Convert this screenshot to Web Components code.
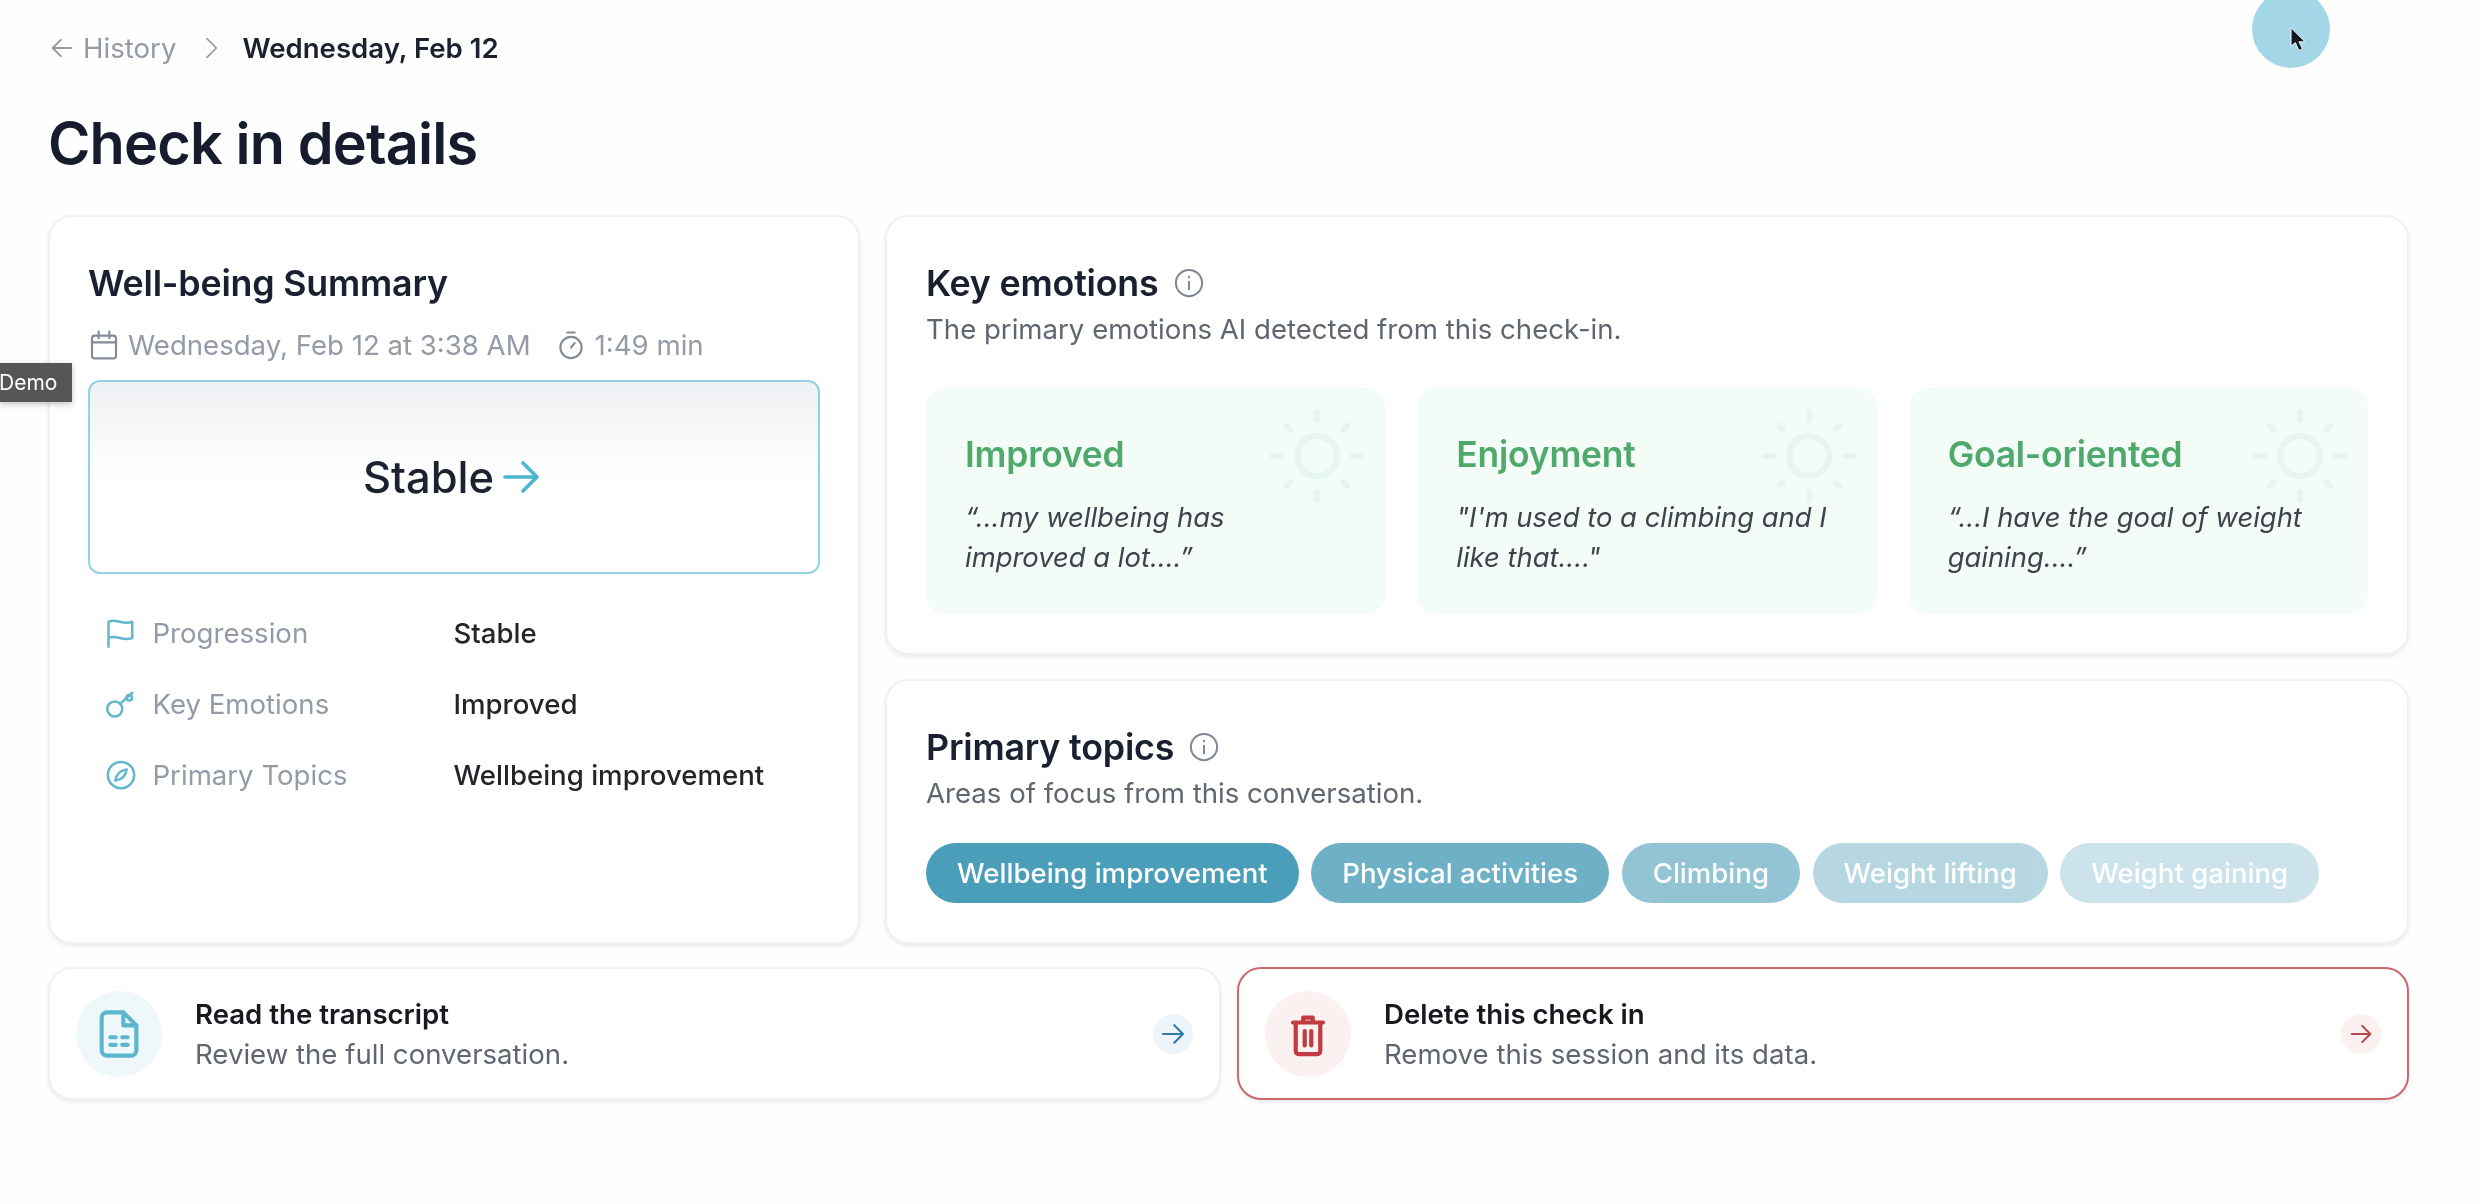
<!DOCTYPE html>
<html lang="en">
<head>
<meta charset="utf-8">
<title>Check in details</title>
<style>
  html, body { margin: 0; height: 100%; background: #fefefe; overflow: hidden; }
  body { font-family: Inter, "Liberation Sans", sans-serif; color: #1a2030; filter: blur(0.7px); }
</style>
</head>
<body>
<checkin-page>
  <bread-crumb slot="crumb" back="History" current="Wednesday, Feb 12"></bread-crumb>
  <h-title slot="title">Check in details</h-title>

  <summary-card slot="summary"></summary-card>

  <info-card slot="emotions" heading="Key emotions" sub="The primary emotions AI detected from this check-in.">
    <emotion-grid>
      <emotion-card name="Improved">“...my wellbeing has improved a lot....”</emotion-card>
      <emotion-card name="Enjoyment">"I'm used to a climbing and I like that...."</emotion-card>
      <emotion-card name="Goal-oriented">“...I have the goal of weight gaining....”</emotion-card>
    </emotion-grid>
  </info-card>

  <info-card slot="topics" heading="Primary topics" sub="Areas of focus from this conversation.">
    <topic-list>
      <topic-chip fade="1">Wellbeing improvement</topic-chip>
      <topic-chip fade="0.8">Physical activities</topic-chip>
      <topic-chip fade="0.6">Climbing</topic-chip>
      <topic-chip fade="0.4">Weight lifting</topic-chip>
      <topic-chip fade="0.28">Weight gaining</topic-chip>
    </topic-list>
  </info-card>

  <action-card slot="read" icon="file" heading="Read the transcript" sub="Review the full conversation."></action-card>
  <action-card slot="del" danger icon="trash" heading="Delete this check in" sub="Remove this session and its data."></action-card>
</checkin-page>

<script>
// all the icons are drawn on a 24 box, stroke colour comes from currentColor
const ICONS = {
  arrow: '<path d="M4 12h16M13 5l7 7-7 7"/>',
  back: '<path d="M20 12H4M11 5l-7 7 7 7"/>',
  chevron: '<path d="M9 5l7 7-7 7"/>',
  calendar: '<rect x="3" y="5" width="18" height="17" rx="2"/><path d="M3 10h18M8 2v5M16 2v5"/>',
  timer: '<circle cx="12" cy="14" r="8.5"/><path d="M9 2h6M12 14l3-3.5"/>',
  flag: '<path d="M2 23V3c6-3 12 3 19 0v13c-7 3-13-3-19 0"/>',
  key: '<circle cx="7" cy="16" r="6"/><path d="M11.300 11.800L21 3"/><circle cx="18.600" cy="7" r="2.200"/>',
  compass: '<circle cx="12" cy="12" r="10.500"/><path d="M16.500 7.500C16 12 14 15.500 7.500 16.500 8 12 11 8.500 16.500 7.500z"/>',
  info: '<circle cx="12" cy="12" r="10.500"/><path d="M12 11v6M12 7v.6"/>',
  file: '<path d="M14 2H6.500A2.500 2.500 0 0 0 4 4.500v15A2.500 2.500 0 0 0 6.500 22h11a2.500 2.500 0 0 0 2.500-2.500V8z"/><path d="M14 2v6h6M8 13.500h2.500M13.500 13.500H16M8 17h2.500M13.500 17H16"/>',
  trash: '<path d="M4.200 6h15.600M9.500 5.500V3.500h5v2M5.600 6v15a1.500 1.500 0 0 0 1.500 1.500h9.800a1.500 1.500 0 0 0 1.500-1.500V6M10.300 10.500v7.500M13.700 10.500v7.500"/>',
  sun: '<circle cx="12" cy="12" r="5"/><path d="M12 1v2M12 21v2M4.500 4.500l.8.8M18.700 18.700l.8.8M1 12h2M21 12h2M4.500 19.500l.8-.8M18.700 5.300l.8-.8"/>'
};

function icon(name, size, sw) {
  return `<svg width="${size}" height="${size}" viewBox="0 0 24 24" fill="none" stroke="currentColor" stroke-width="${sw}" stroke-linecap="round" stroke-linejoin="round">${ICONS[name]}</svg>`;
}

class CheckinPage extends HTMLElement {
  constructor() {
    super();
    this.attachShadow({ mode: 'open' }).innerHTML = `
    <style>
      :host { display: block; position: relative; height: 1204px; box-sizing: border-box; padding: 30px 71px 0 48px; overflow: hidden; }
      .grid { display: grid; grid-template-columns: 812px 1fr; grid-template-rows: 440px 265px; gap: 24px 25px; margin-top: 37px; }
      .summary { grid-row: 1 / 3; display: grid; }
      .actions { display: grid; grid-template-columns: 1173px 1fr; gap: 16px; margin-top: 23px; height: 133px; }
      .demo { position: absolute; left: 0; top: 363px; width: 72px; height: 39px; background: #565654; color: #fff; font-size: 21px; line-height: 39px; text-indent: -1px; box-shadow: 0 2px 6px rgba(0,0,0,.25); white-space: nowrap; overflow: hidden; }
      .pointer { position: absolute; left: 2252px; top: -10px; width: 78px; height: 78px; border-radius: 50%; background: #a3d6e7; }
      .pointer svg { position: absolute; left: 37px; top: 37px; }
    </style>
    <slot name="crumb"></slot>
    <slot name="title"></slot>
    <div class="grid">
      <div class="summary"><slot name="summary"></slot></div>
      <slot name="emotions"></slot>
      <slot name="topics"></slot>
    </div>
    <div class="actions">
      <slot name="read"></slot>
      <slot name="del"></slot>
    </div>
    <div class="demo">Demo</div>
    <div class="pointer"><svg width="18" height="26" viewBox="0 0 20 30"><path d="M2 1l0 21 5-4 4 9 4-2-4-8h7z" fill="#14171c" stroke="#fff" stroke-width="1"/></svg></div>
    `;
  }
}

class BreadCrumb extends HTMLElement {
  constructor() {
    super();
    this.attachShadow({ mode: 'open' }).innerHTML = `
    <style>
      :host { display: flex; align-items: center; height: 36px; font-size: 27.6px; }
      .back { color: #949ba6; display: flex; align-items: center; gap: 7px; }
      svg { display: block; }
      .sep { color: #949ba6; margin: 0 15px 0 19px; display: flex; }
      .cur { color: #1c2130; font-weight: 600; }
    </style>
    <span class="back">${icon('back', 28, 1.6)}<span>${this.getAttribute('back')}</span></span>
    <span class="sep">${icon('chevron', 32, 1.3)}</span>
    <span class="cur">${this.getAttribute('current')}</span>
    `;
  }
}

class HTitle extends HTMLElement {
  constructor() {
    super();
    this.attachShadow({ mode: 'open' }).innerHTML = `
    <style>
      :host { display: block; font-size: 57.6px; font-weight: 600; line-height: 70px; letter-spacing: -.85px; color: #161c2c; margin-top: 42px; }
    </style>
    <slot></slot>`;
  }
}

// common white box with the soft bottom shadow
const CARD_CSS = `
  background: #fff; border: 2px solid #f0f1f2; border-radius: 24px; box-sizing: border-box;
  box-shadow: 0 2px 4px rgba(20, 30, 40, .09);
`;

class SummaryCard extends HTMLElement {
  constructor() {
    super();
    const rows = [
      ['flag', 'Progression', 'Stable'],
      ['key', 'Key Emotions', 'Improved'],
      ['compass', 'Primary Topics', 'Wellbeing improvement']
    ].map(([ic, label, val]) => `
      <div class="row"><span class="ic">${icon(ic, 30, 2)}</span><span class="lbl">${label}</span><span class="val">${val}</span></div>`).join('');
    this.attachShadow({ mode: 'open' }).innerHTML = `
    <style>
      :host { display: block; ${CARD_CSS} padding: 43px 38px; font-size: 27.6px; }
      h2 { margin: 0; font-size: 35.8px; line-height: 46px; font-weight: 600; letter-spacing: -.2px; color: #1a2030; }
      .meta { display: flex; align-items: center; margin-top: 22px; height: 34px; color: #949ba6; }
      .meta svg { display: block; }
      .meta .t1 { margin: 0 25px 0 8px; }
      .meta .t2 { margin-left: 9px; }
      .meta .ic2 { color: #858c98; display: flex; }
      .status { display: flex; align-items: center; justify-content: center; gap: 3px; height: 194px; margin-top: 18px; box-sizing: border-box; border: 2.500px solid #93d2e3; border-radius: 12px; background: linear-gradient(#eef1f3, #fff 52%); color: #1d2230; font-size: 43.500px; font-weight: 500; }
      .status span { display: flex; color: #4bb5d0; }
      .rows { margin-top: 23px; display: flex; flex-direction: column; }
      .row { display: grid; grid-template-columns: 47px 301px 1fr; align-items: center; height: 71px; margin-left: 17.500px; }
      .ic { color: #62b7cd; display: flex; }
      .lbl { color: #939ba7; }
      .val { color: #232529; font-weight: 500; }
    </style>
    <h2>Well-being Summary</h2>
    <div class="meta">
      <span class="ic2">${icon('calendar', 32, 1.600)}</span><span class="t1">Wednesday, Feb 12 at 3:38 AM</span>
      <span class="ic2">${icon('timer', 30, 1.700)}</span><span class="t2">1:49 min</span>
    </div>
    <div class="status">Stable <span>${icon('arrow', 48, 1.800)}</span></div>
    <div class="rows">${rows}</div>
    `;
  }
}

class InfoCard extends HTMLElement {
  constructor() {
    super();
    this.attachShadow({ mode: 'open' }).innerHTML = `
    <style>
      :host { display: block; ${CARD_CSS} padding: 43px 39px; }
      .head { display: flex; align-items: center; gap: 15px; height: 46px; }
      h2 { margin: 0; font-size: 35.8px; font-weight: 600; letter-spacing: -.2px; color: #1a2030; }
      .head span { display: flex; color: #7f8796; }
      p { margin: 5px 0 0; font-size: 27.6px; line-height: 36px; color: #5f6670; }
      .body { margin-top: 41px; }
    </style>
    <div class="head"><h2>${this.getAttribute('heading')}</h2><span>${icon('info', 30, 1.600)}</span></div>
    <p>${this.getAttribute('sub')}</p>
    <div class="body"><slot></slot></div>
    `;
  }
}

class EmotionGrid extends HTMLElement {
  constructor() {
    super();
    this.attachShadow({ mode: 'open' }).innerHTML = `
    <style>:host { display: grid; grid-template-columns: repeat(3, 1fr); gap: 32px; }</style>
    <slot></slot>`;
  }
}

class EmotionCard extends HTMLElement {
  constructor() {
    super();
    this.attachShadow({ mode: 'open' }).innerHTML = `
    <style>
      :host { display: block; position: relative; height: 226px; box-sizing: border-box; padding: 44px 39px 0; background: #f3fcf6; border-radius: 19px; overflow: hidden; }
      h3 { margin: 0; font-size: 35.4px; line-height: 46px; font-weight: 600; color: #50a96c; letter-spacing: -.2px; position: relative; }
      p { margin: 19px 0 0; font-size: 27.4px; line-height: 40px; font-style: italic; color: #3c434c; position: relative; }
      .sun { position: absolute; right: 20px; top: 20px; color: #e6f6ed; }
    </style>
    <span class="sun">${icon('sun', 96, 1.600)}</span>
    <h3>${this.getAttribute('name')}</h3>
    <p><slot></slot></p>
    `;
  }
}

class TopicList extends HTMLElement {
  constructor() {
    super();
    this.attachShadow({ mode: 'open' }).innerHTML = `
    <style>:host { display: flex; gap: 12.500px; margin-top: -9px; }</style>
    <slot></slot>`;
  }
}

class TopicChip extends HTMLElement {
  constructor() {
    super();
    this.attachShadow({ mode: 'open' }).innerHTML = `
    <style>
      :host { display: flex; align-items: center; height: 60px; padding: 0 31px; border-radius: 30px; background: #4a9eb9; color: #fff; font-size: 27.6px; font-weight: 500; opacity: ${this.getAttribute('fade')}; white-space: nowrap; }
    </style>
    <slot></slot>`;
  }
}

class ActionCard extends HTMLElement {
  constructor() {
    super();
    const danger = this.hasAttribute('danger');
    const main = danger ? '#c23b40' : '#5cb6ce';
    const bub = danger ? '#fbf1f1' : '#eef8fb';
    const chip = danger ? '#fbf1f1' : '#eef5fa';
    const arrow = danger ? '#b8474b' : '#2e7ea6';
    this.attachShadow({ mode: 'open' }).innerHTML = `
    <style>
      :host { display: flex; align-items: center; ${CARD_CSS} padding: 0 26px; ${danger ? 'border-color: #c9696c;' : ''} }
      .bubble { flex: none; width: 86px; height: 86px; border-radius: 50%; background: ${bub}; color: ${main}; display: flex; align-items: center; justify-content: center; }
      .text { flex: 1; margin-left: 33px; font-size: 27.6px; }
      .t { font-weight: 600; color: #17191e; line-height: 36px; }
      .s { color: #5f6670; line-height: 36px; margin-top: 4px; }
      .chip { flex: none; width: 40px; height: 40px; border-radius: 50%; background: ${chip}; color: ${arrow}; display: flex; align-items: center; justify-content: center; }
    </style>
    <span class="bubble">${icon(this.getAttribute('icon'), danger ? 46 : 52, danger ? 2.200 : 1.900)}</span>
    <div class="text"><div class="t">${this.getAttribute('heading')}</div><div class="s">${this.getAttribute('sub')}</div></div>
    <span class="chip">${icon('arrow', danger ? 28 : 30, 1.700)}</span>
    `;
  }
}

customElements.define('checkin-page', CheckinPage);
customElements.define('bread-crumb', BreadCrumb);
customElements.define('h-title', HTitle);
customElements.define('summary-card', SummaryCard);
customElements.define('info-card', InfoCard);
customElements.define('emotion-grid', EmotionGrid);
customElements.define('emotion-card', EmotionCard);
customElements.define('topic-list', TopicList);
customElements.define('topic-chip', TopicChip);
customElements.define('action-card', ActionCard);
</script>
</body>
</html>
